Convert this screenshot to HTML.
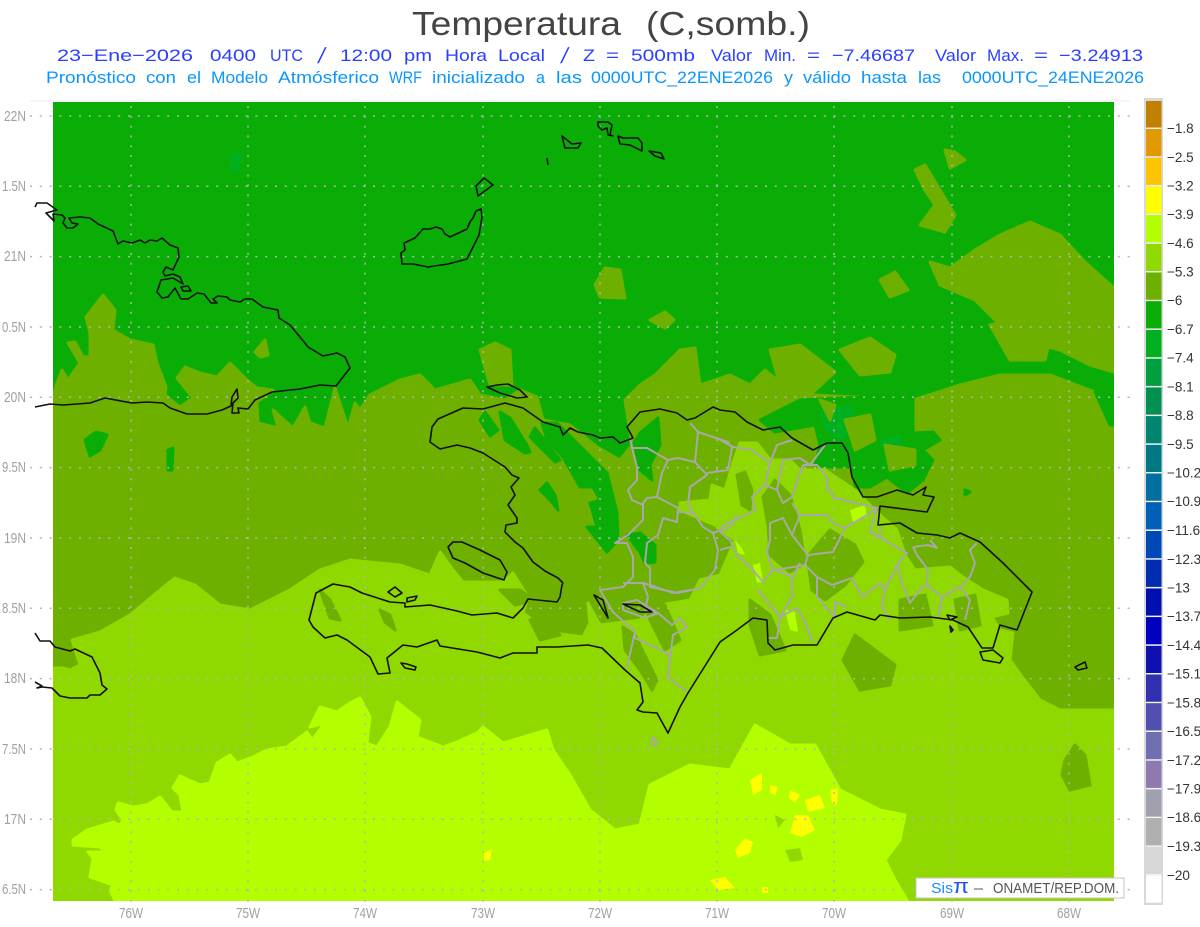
<!DOCTYPE html>
<html><head><meta charset="utf-8"><title>Temperatura</title>
<style>html,body{margin:0;padding:0;background:#fff}svg{display:block}text{font-family:"Liberation Sans",sans-serif}</style></head>
<body>
<svg width="1200" height="927" viewBox="0 0 1200 927" xmlns="http://www.w3.org/2000/svg">
<rect width="1200" height="927" fill="#fff"/>
<g font-size="33" fill="#444">
<text x="412" y="35" textLength="209" lengthAdjust="spacingAndGlyphs">Temperatura</text>
<text x="646" y="35" textLength="164" lengthAdjust="spacingAndGlyphs">(C,somb.)</text>
</g>
<g font-size="17" fill="#2b40ff">
<text x="57" y="61" textLength="136" lengthAdjust="spacingAndGlyphs">23−Ene−2026</text>
<text x="210" y="61" textLength="46" lengthAdjust="spacingAndGlyphs">0400</text>
<text x="270" y="61" textLength="33" lengthAdjust="spacingAndGlyphs">UTC</text>
<text x="317" y="63" font-size="22" transform="skewX(-12) translate(13.500 0)">/</text>
<text x="340" y="61" textLength="52" lengthAdjust="spacingAndGlyphs">12:00</text>
<text x="404" y="61" textLength="28" lengthAdjust="spacingAndGlyphs">pm</text>
<text x="445" y="61" textLength="42" lengthAdjust="spacingAndGlyphs">Hora</text>
<text x="498" y="61" textLength="47" lengthAdjust="spacingAndGlyphs">Local</text>
<text x="560" y="63" font-size="22" transform="skewX(-12) translate(13.500 0)">/</text>
<text x="583" y="61" textLength="12" lengthAdjust="spacingAndGlyphs">Z</text>
<text x="606" y="61" textLength="13" lengthAdjust="spacingAndGlyphs">=</text>
<text x="631" y="61" textLength="64" lengthAdjust="spacingAndGlyphs">500mb</text>
<text x="711" y="61" textLength="41" lengthAdjust="spacingAndGlyphs">Valor</text>
<text x="764" y="61" textLength="32" lengthAdjust="spacingAndGlyphs">Min.</text>
<text x="807" y="61" textLength="13" lengthAdjust="spacingAndGlyphs">=</text>
<text x="832" y="61" textLength="83" lengthAdjust="spacingAndGlyphs">−7.46687</text>
<text x="935" y="61" textLength="41" lengthAdjust="spacingAndGlyphs">Valor</text>
<text x="987" y="61" textLength="37" lengthAdjust="spacingAndGlyphs">Max.</text>
<text x="1034" y="61" textLength="14" lengthAdjust="spacingAndGlyphs">=</text>
<text x="1059" y="61" textLength="84" lengthAdjust="spacingAndGlyphs">−3.24913</text>
</g>
<g font-size="16.500" fill="#0a96ff">
<text x="46" y="83" textLength="90" lengthAdjust="spacingAndGlyphs">Pronóstico</text>
<text x="146" y="83" textLength="30" lengthAdjust="spacingAndGlyphs">con</text>
<text x="187" y="83" textLength="14" lengthAdjust="spacingAndGlyphs">el</text>
<text x="211" y="83" textLength="57" lengthAdjust="spacingAndGlyphs">Modelo</text>
<text x="278" y="83" textLength="101" lengthAdjust="spacingAndGlyphs">Atmósferico</text>
<text x="389" y="83" textLength="33" lengthAdjust="spacingAndGlyphs">WRF</text>
<text x="432" y="83" textLength="93" lengthAdjust="spacingAndGlyphs">inicializado</text>
<text x="536" y="83" textLength="9" lengthAdjust="spacingAndGlyphs">a</text>
<text x="556" y="83" textLength="26" lengthAdjust="spacingAndGlyphs">las</text>
<text x="591" y="83" textLength="182" lengthAdjust="spacingAndGlyphs">0000UTC_22ENE2026</text>
<text x="784" y="83" textLength="9" lengthAdjust="spacingAndGlyphs">y</text>
<text x="803" y="83" textLength="48" lengthAdjust="spacingAndGlyphs">válido</text>
<text x="861" y="83" textLength="46" lengthAdjust="spacingAndGlyphs">hasta</text>
<text x="918" y="83" textLength="23" lengthAdjust="spacingAndGlyphs">las</text>
<text x="962" y="83" textLength="182" lengthAdjust="spacingAndGlyphs">0000UTC_24ENE2026</text>
</g>
<line x1="30" y1="101" x2="1130" y2="101" stroke="#eee"/>
<clipPath id="c"><rect x="53" y="102" width="1061" height="799"/></clipPath>
<g clip-path="url(#c)" stroke-linejoin="round" stroke-width="3">
<rect x="53" y="102" width="1061" height="799" fill="#0aad05"/>
<g fill="#6eb000" stroke="#6eb000">
<polygon points="53,395 58,380 62,370 68,380 80,363 68,343 75,342 83,357 90,357 90,333 86,317 103,295 115,310 113,330 130,340 153,345 157,363 166,387 165,395 180,407 193,398 177,378 185,367 200,373 217,377 230,363 247,380 257,388 273,390 257,402 258,423 278,428 273,410 293,428 305,407 310,423 325,428 335,388 348,428 355,403 360,410 370,395 400,380 420,375 435,390 470,380 480,395 505,400 520,390 537,397 543,420 570,425 597,447 620,460 632,445 625,400 640,385 655,375 680,350 695,348 700,385 730,375 750,385 765,370 790,390 815,395 913,400 960,385 1000,375 1050,375 1095,392 1110,425 1114,425 1114,901 53,901"/>
<polygon points="1114,288 1085,262 1060,235 1030,222 1000,235 975,250 950,268 930,262 940,285 975,300 1000,325 1040,345 1060,350 1090,365 1114,372"/>
<polygon points="915,170 925,165 955,215 945,232 920,225 935,205 925,190"/>
<polygon points="945,150 955,152 965,160 950,168"/>
<polygon points="595,285 605,268 620,270 625,298 600,297"/>
<polygon points="880,280 895,272 908,290 890,297"/>
<polygon points="650,320 665,312 674,320 665,328"/>
<polygon points="480,350 495,343 510,350 512,385 490,385"/>
<polygon points="840,350 870,338 895,355 890,372 860,375"/>
<polygon points="990,325 1020,318 1050,340 1045,360 1010,360"/>
<polygon points="1060,325 1080,322 1090,340 1070,345"/>
<polygon points="770,350 800,345 835,372 810,395 780,385"/>
<polygon points="255,352 265,340 268,355 260,357"/>
</g>
<g fill="#0aad05" stroke="#0aad05">
<polygon points="800,400 760,420 775,432 815,425 820,445 815,465 830,467 853,467 855,487 870,487 887,477 907,493 923,480 933,460 923,450 940,440 933,432 913,433 913,395"/>
<polygon points="1114,380 1095,392 1110,425 1114,425"/>
<polygon points="542,423 557,423 607,473 617,513 618,540 607,552 587,527 597,527 590,503 600,500 593,487 580,487 563,457 547,440"/>
<polygon points="500,412 510,418 527,445 530,452 525,453 505,440"/>
<polygon points="530,437 535,428 560,460 555,462"/>
<polygon points="480,420 485,412 498,430 490,436"/>
<polygon points="634,443 640,433 658,418 660,445 650,465 652,480 640,470"/>
<polygon points="627,535 640,533 655,545 655,562 645,563 640,552"/>
<polygon points="85,440 96,432 107,435 100,450 90,456"/>
<polygon points="168,450 173,448 172,470 168,470"/>
<polygon points="540,490 547,483 555,495 558,510 550,500"/>
<polygon points="785,520 790,520 790,535 785,535"/>
<polygon points="812,530 818,528 822,540 815,542"/>
<polygon points="965,490 970,492 965,495"/>
</g>
<g fill="#00b020">
<polygon points="230,155 240,152 243,160 236,173 231,170"/>
<polygon points="820,410 850,405 860,430 840,440 825,430"/>
<polygon points="880,440 900,435 905,450 885,455"/>
</g>
<g fill="#6eb000" stroke="#6eb000">
<polygon points="845,420 870,415 875,440 855,450"/>
<polygon points="885,445 915,450 915,465 890,470"/>
<polygon points="820,400 835,405 830,420"/>
</g>
<polygon fill="#8fd900" stroke="#8fd900" points="53,668 63,668 70,670 80,665 72,640 100,632 130,615 160,590 175,578 195,585 220,605 250,610 290,590 320,570 350,560 400,565 430,575 440,552 453,570 463,582 503,582 513,573 528,597 523,613 537,623 553,633 583,637 590,623 588,603 600,625 640,620 660,605 690,600 700,580 720,575 735,540 715,525 680,510 680,503 710,500 712,485 725,490 733,463 740,443 757,443 770,460 790,460 800,470 825,470 840,480 855,490 870,505 880,515 897,530 905,555 915,570 950,567 960,575 983,590 1007,600 1008,613 992,617 1000,630 1013,633 1010,660 1017,670 1040,700 1060,710 1114,710 1114,905 53,905"/>
<g fill="#6eb000" stroke="#6eb000">
<polygon points="737,475 745,472 752,490 750,510 742,505"/>
<polygon points="763,497 775,480 790,495 800,530 805,563 790,572 770,555 768,525"/>
<polygon points="807,557 830,530 855,545 863,562 845,585 825,600 812,590"/>
<polygon points="843,660 855,635 875,650 895,665 890,685 860,690"/>
<polygon points="1065,760 1075,745 1085,755 1090,785 1070,790 1062,775"/>
<polygon points="623,627 635,635 657,680 652,690 640,670 625,650"/>
<polygon points="530,620 545,615 560,635 540,640"/>
<polygon points="500,590 520,590 535,600 515,605"/>
<polygon points="750,600 770,615 785,650 760,655 750,625"/>
<polygon points="320,590 330,600 340,620 330,618"/>
<polygon points="380,610 390,615 395,630 385,622"/>
<polygon points="640,590 665,605 680,640 665,650 650,620"/>
<polygon points="900,600 925,595 932,625 900,630"/>
<polygon points="955,600 975,595 980,625 960,630"/>
</g>
<polygon fill="#b3ff00" stroke="#b3ff00" points="117,905 110,890 113,885 90,877 93,858 88,852 105,852 100,847 73,845 73,840 87,830 113,822 120,825 123,820 116,810 118,803 133,807 147,805 160,797 172,812 183,812 180,795 173,788 180,776 200,785 210,783 217,763 230,755 237,763 253,757 267,750 287,747 307,732 312,740 325,723 310,727 320,707 337,712 350,703 360,698 370,717 367,743 377,747 390,727 397,702 420,720 417,737 443,747 457,742 477,733 483,727 503,743 547,730 553,750 570,775 590,810 615,830 640,825 650,785 690,765 730,770 755,725 790,745 815,745 840,790 880,810 905,815 900,840 885,860 895,880 910,905"/>
<g fill="#b3ff00">
<polygon points="850,510 865,505 867,517 853,522"/>
<polygon points="753,565 760,563 763,582 757,583"/>
<polygon points="785,610 795,612 798,632 790,630"/>
<polygon points="735,540 742,548 745,555 738,553"/>
</g>
<g fill="#8fd900"><polygon points="785,850 800,848 803,860 790,862"/><polygon points="775,815 785,820 778,828"/></g>
<g fill="#ffff00">
<polygon points="750,780 762,773 762,790 753,795"/>
<polygon points="790,790 800,795 795,803 789,798"/>
<polygon points="805,800 820,795 825,808 808,812"/>
<polygon points="830,790 838,788 837,805 832,803"/>
<polygon points="795,815 808,815 815,830 802,837 790,833"/>
<polygon points="735,850 745,838 753,842 750,853 738,858"/>
<polygon points="710,880 725,877 735,888 718,890"/>
<polygon points="484,853 492,849 490,860 484,861"/>
<polygon points="762,887 768,887 768,893 762,893"/>
<polygon points="770,785 778,787 775,795 770,793"/>
</g>
</g>
<g stroke="#b4b4b4" stroke-width="1.500" stroke-dasharray="2 7.800" fill="none">
<path d="M30 116H1133M30 186.300H1133M30 256.600H1133M30 327H1133M30 397.300H1133M30 467.600H1133M30 538H1133M30 608.300H1133M30 678.600H1133M30 749H1133M30 819.300H1133M30 889.600H1133"/>
<path d="M131 106V908M248 106V908M365 106V908M483 106V908M600 106V908M717 106V908M834 106V908M952 106V908M1069 106V908"/>
</g>
<g fill="none" stroke="#a8a8a8" stroke-width="2" stroke-linejoin="round">
<path d="M630 438L633 452 637 467 637 480 628 490 632 500 643 505 643 520 628 535 615 543 627 543 633 557 633 577 623 587 600 590 613 612 635 632 627 667"/>
<path d="M633 448L647 448 668 460 678 458 695 462 698 432 690 423"/>
<path d="M668 460L662 473 657 497 647 498 642 505"/>
<path d="M657 497L678 508 677 522 663 518 658 535 647 543 645 563 650 568 650 588"/>
<path d="M695 462L707 475 690 487 688 505 703 527 713 533 718 550 715 570 700 588 678 593 650 587"/>
<path d="M678 512L695 513M698 432L728 442 732 448 728 470 707 473M713 533L730 527 737 515"/>
<path d="M720 440L733 447 752 450 770 463 765 485 777 490 783 460 800 458 810 465 825 445"/>
<path d="M792 440L777 445 770 463M765 485L752 497 755 510 740 518 723 525 720 532"/>
<path d="M803 465L792 497 783 503 777 490M792 503L800 515 827 515 833 523 845 528 867 515 877 508 835 498 827 488 827 477 817 465 803 465"/>
<path d="M800 515L792 535 808 555 833 552 845 528M770 523L783 518 792 535M770 523L770 540 767 552 773 570 763 582 753 570 737 555 730 540 720 532"/>
<path d="M808 555L805 565 775 570 793 577 800 563M805 565L817 577 817 597 835 617 835 602 847 607"/>
<path d="M817 577L832 585 852 578 862 597 880 583 885 590 882 607 890 620"/>
<path d="M870 532L907 553 897 565 885 590M897 565L902 583 910 603 922 587 927 585 942 597 938 617M942 597L960 587 970 600 965 620"/>
<path d="M877 507L870 532 880 537 880 525M913 547L928 545 937 548 930 540M913 547L917 555 928 570 927 585M977 543L970 550 975 563 970 577 960 587"/>
<path d="M792 577L792 597 780 617 777 638 767 638M758 590L780 617 797 608 805 622 813 643"/>
<path d="M635 632L635 638 667 653 670 658 668 677 687 692M643 583L648 597 645 610 658 613 672 625 680 618 687 627 673 635 670 658M623 583L643 583 650 585 673 593 690 590M650 570L650 585M623 603L637 600 658 613M623 603L623 610 645 618 658 613"/>
<path d="M720 550L730 547M653 737L657 742 655 746 651 744Z"/>
</g>
<g fill="none" stroke="#111" stroke-width="1.600" stroke-linejoin="round">
<path d="M35 207L37 203 47 203 57 210 46 213 54 221 53 214 62 215 65 218 63 223 67 228 73 228 78 224 72 223 69 218 80 217 90 218 98 224 113 231 118 244 123 241 132 243 140 240 145 243 150 240 157 241 162 238 170 245 178 248 179 257 173 270 166 267 163 272 165 276 173 274 180 277 183 284 173 278 161 280 157 292 162 298 168 297 175 288 181 299 188 299 197 293 204 294 211 303 217 303 213 299 218 296 227 297 230 300 240 302 245 299 252 299 263 307 278 310 279 318 290 325 300 337 308 347 323 356 337 353 345 357 350 368 343 377 336 386 320 385 300 389 272 392 255 400 248 409 238 408 239 413 232 413 233 403 238 398 237 389 232 397 231 406 222 410 207 414 187 414 170 408 163 403 147 402 132 403 105 398 90 403 63 405 50 404 35 407"/>
<path d="M181 287L188 286 191 291 183 291Z"/>
<path d="M401 253L405 250 404 243 415 238 423 229 430 229 436 227 442 229 445 234 450 237 467 229 470 222 473 218 476 211 481 209 482 217 479 235 467 259 448 264 428 267 413 264 402 264Z"/>
<path d="M476 186L484 178 493 185 478 196Z"/>
<path d="M547 158L548 165"/>
<path d="M562 136L572 144 581 143 578 148 565 148Z"/>
<path d="M598 122L608 122 612 125 610 135 613 136 608 135 607 128 602 130 598 126Z"/>
<path d="M618 136L623 138 638 138 642 143 642 151 630 145 620 144Z"/>
<path d="M649 151L661 153 664 159 655 156Z"/>
<path d="M487 387L497 385 508 384 520 390 527 397 517 398 500 393Z"/>
<path d="M448 547L453 542 462 542 480 550 500 560 507 572 504 580 483 573 465 563 453 558Z"/>
<path d="M563 583L558 578 545 571 533 562 523 548 515 542 505 532 506 525 517 523 517 518 508 505 515 495 511 487 519 478 512 475 505 467 483 453 470 448 457 445 440 449 430 442 432 427 438 419 463 408 483 409 505 403 523 408 543 422 560 427 563 435 570 428 578 432 593 435 600 438 613 437 620 443 633 438 627 427 640 412 660 409 677 413 687 420 695 418 713 407 720 410 735 412 747 422 763 430 780 427 792 438 813 450 827 443 842 443 848 453 852 477 863 497 877 497 897 490 913 495 926 487 923 495 934 497 927 512 880 506 878 525 900 523 917 533 937 535 950 538 960 533 980 542 1003 563 1032 592 1017 630 1000 625 993 648 982 648 968 627 953 620 930 617 900 618 880 615 875 620 847 612 833 618 817 645 793 645 775 650 768 643 767 620 753 618 737 630 720 642 688 693 680 707 668 733 657 713 643 712 637 710 643 702 640 683 625 670 602 648 588 645 557 647 537 647 537 653 513 653 500 658 477 652 440 646 437 640 417 647 403 645 387 658 390 673 378 674 370 657 347 640 337 635 325 638 313 627 309 620 316 593 333 584 350 587 362 593 390 602 405 603 405 607 430 605 457 611 472 615 497 613 513 618 523 608 528 599 557 602 560 597 562 585 563 583"/>
<path d="M401 663L407 664 416 667 415 670 405 668Z"/>
<path d="M388 592L395 587 402 593 395 597Z"/>
<path d="M407 598L417 596 415 600 407 602Z"/>
<path d="M980 652L993 650 1003 658 1000 663 983 660Z"/>
<path d="M947 615L957 617 950 620Z"/>
<path d="M950 626L953 630 951 632Z"/>
<path d="M35 633L40 641 50 641 55 647 70 651 75 649 92 657 100 673 102 685 107 689 100 695 90 695 87 698 70 698 60 696 52 688 42 687 37 688 42 686 35 682"/>
<path d="M1075 667L1085 662 1087 668 1078 670Z"/>
<path d="M594 595L608 618 603 600Z"/>
<path d="M623 604L640 605 652 612 640 612Z"/>
</g>
<g fill="#a0a0a0" font-size="15">
<text x="4" y="121" textLength="22" lengthAdjust="spacingAndGlyphs">22N</text><text x="2" y="191" textLength="24" lengthAdjust="spacingAndGlyphs">1.5N</text><text x="4" y="261" textLength="22" lengthAdjust="spacingAndGlyphs">21N</text><text x="2" y="332" textLength="24" lengthAdjust="spacingAndGlyphs">0.5N</text><text x="4" y="402" textLength="22" lengthAdjust="spacingAndGlyphs">20N</text><text x="2" y="472" textLength="24" lengthAdjust="spacingAndGlyphs">9.5N</text><text x="4" y="543" textLength="22" lengthAdjust="spacingAndGlyphs">19N</text><text x="2" y="613" textLength="24" lengthAdjust="spacingAndGlyphs">8.5N</text><text x="4" y="683" textLength="22" lengthAdjust="spacingAndGlyphs">18N</text><text x="2" y="754" textLength="24" lengthAdjust="spacingAndGlyphs">7.5N</text><text x="4" y="824" textLength="22" lengthAdjust="spacingAndGlyphs">17N</text><text x="2" y="894" textLength="24" lengthAdjust="spacingAndGlyphs">6.5N</text>
</g>
<g fill="#a0a0a0" font-size="15">
<text x="119" y="918" textLength="24" lengthAdjust="spacingAndGlyphs">76W</text><text x="236" y="918" textLength="24" lengthAdjust="spacingAndGlyphs">75W</text><text x="353" y="918" textLength="24" lengthAdjust="spacingAndGlyphs">74W</text><text x="471" y="918" textLength="24" lengthAdjust="spacingAndGlyphs">73W</text><text x="588" y="918" textLength="24" lengthAdjust="spacingAndGlyphs">72W</text><text x="705" y="918" textLength="24" lengthAdjust="spacingAndGlyphs">71W</text><text x="822" y="918" textLength="24" lengthAdjust="spacingAndGlyphs">70W</text><text x="940" y="918" textLength="24" lengthAdjust="spacingAndGlyphs">69W</text><text x="1057" y="918" textLength="24" lengthAdjust="spacingAndGlyphs">68W</text>
</g>
<rect x="1144" y="98" width="19" height="807" fill="#d8d8d8"/>
<g stroke="#fff" stroke-width="1" fill="none">
<rect x="1146" y="101" width="15.500" height="26.500" fill="#c08000" stroke="none"/>
<rect x="1146" y="129" width="15.500" height="27.200" fill="#e09a00" stroke="none"/>
<rect x="1146" y="157.700" width="15.500" height="27.200" fill="#ffc400" stroke="none"/>
<rect x="1146" y="186.400" width="15.500" height="27.200" fill="#ffff00" stroke="none"/>
<rect x="1146" y="215.100" width="15.500" height="27.200" fill="#b3ff00" stroke="none"/>
<rect x="1146" y="243.800" width="15.500" height="27.200" fill="#8fd900" stroke="none"/>
<rect x="1146" y="272.500" width="15.500" height="27.200" fill="#6eb000" stroke="none"/>
<rect x="1146" y="301.200" width="15.500" height="27.200" fill="#0aad05" stroke="none"/>
<rect x="1146" y="330" width="15.500" height="27.200" fill="#00b020" stroke="none"/>
<rect x="1146" y="358.700" width="15.500" height="27.200" fill="#00a040" stroke="none"/>
<rect x="1146" y="387.400" width="15.500" height="27.200" fill="#009050" stroke="none"/>
<rect x="1146" y="416.100" width="15.500" height="27.200" fill="#008570" stroke="none"/>
<rect x="1146" y="444.800" width="15.500" height="27.200" fill="#007885" stroke="none"/>
<rect x="1146" y="473.500" width="15.500" height="27.200" fill="#0070a0" stroke="none"/>
<rect x="1146" y="502.200" width="15.500" height="27.200" fill="#0060b8" stroke="none"/>
<rect x="1146" y="531" width="15.500" height="27.200" fill="#0048b8" stroke="none"/>
<rect x="1146" y="559.700" width="15.500" height="27.200" fill="#002cb0" stroke="none"/>
<rect x="1146" y="588.400" width="15.500" height="27.200" fill="#0010b0" stroke="none"/>
<rect x="1146" y="617.100" width="15.500" height="27.200" fill="#0000c0" stroke="none"/>
<rect x="1146" y="645.800" width="15.500" height="27.200" fill="#1010b0" stroke="none"/>
<rect x="1146" y="674.500" width="15.500" height="27.200" fill="#3030b0" stroke="none"/>
<rect x="1146" y="703.200" width="15.500" height="27.200" fill="#5050b0" stroke="none"/>
<rect x="1146" y="732" width="15.500" height="27.200" fill="#7070b0" stroke="none"/>
<rect x="1146" y="760.700" width="15.500" height="27.200" fill="#9078b0" stroke="none"/>
<rect x="1146" y="789.400" width="15.500" height="27.200" fill="#a0a0b0" stroke="none"/>
<rect x="1146" y="818.100" width="15.500" height="27.200" fill="#b0b0b0" stroke="none"/>
<rect x="1146" y="846.800" width="15.500" height="27.200" fill="#d8d8d8" stroke="none"/>
<rect x="1146" y="875.500" width="15.500" height="27.200" fill="#ffffff" stroke="none"/>
<path d="M1146 128.300H1161.500M1146 157H1161.500M1146 185.700H1161.500M1146 214.400H1161.500M1146 243.100H1161.500M1146 271.800H1161.500M1146 300.500H1161.500M1146 329.200H1161.500M1146 358H1161.500M1146 386.700H1161.500M1146 415.400H1161.500M1146 444.100H1161.500M1146 472.800H1161.500M1146 501.500H1161.500M1146 530.200H1161.500M1146 559H1161.500M1146 587.700H1161.500M1146 616.400H1161.500M1146 645.100H1161.500M1146 673.800H1161.500M1146 702.500H1161.500M1146 731.200H1161.500M1146 760H1161.500M1146 788.700H1161.500M1146 817.400H1161.500M1146 846.100H1161.500M1146 874.800H1161.500" stroke-opacity=".85"/>
</g>
<g fill="#333" font-size="13.500">
<text x="1167" y="133">−1.8</text><text x="1167" y="162">−2.5</text><text x="1167" y="190.500">−3.2</text><text x="1167" y="219">−3.9</text><text x="1167" y="248">−4.6</text><text x="1167" y="276.500">−5.3</text><text x="1167" y="305">−6</text><text x="1167" y="334">−6.7</text><text x="1167" y="362.500">−7.4</text><text x="1167" y="391.500">−8.1</text><text x="1167" y="420">−8.8</text><text x="1167" y="449">−9.5</text><text x="1167" y="477.500">−10.2</text><text x="1167" y="506">−10.9</text><text x="1167" y="535">−11.6</text><text x="1167" y="564">−12.3</text><text x="1167" y="592.500">−13</text><text x="1167" y="621">−13.7</text><text x="1167" y="650">−14.4</text><text x="1167" y="678.500">−15.1</text><text x="1167" y="707.500">−15.8</text><text x="1167" y="736">−16.5</text><text x="1167" y="765">−17.2</text><text x="1167" y="793.500">−17.9</text><text x="1167" y="822">−18.6</text><text x="1167" y="851">−19.3</text><text x="1167" y="880">−20</text>
</g>
<rect x="916" y="878" width="208" height="20" fill="#fff" stroke="#c4c4c4"/>
<text x="931" y="893" font-size="15" fill="#1a8cff" textLength="22" lengthAdjust="spacingAndGlyphs">Sis</text>
<text x="953" y="893" font-size="20" fill="#1a50ff" textLength="16" lengthAdjust="spacingAndGlyphs">π</text>
<text x="974" y="893" font-size="14.500" fill="#555" textLength="9" lengthAdjust="spacingAndGlyphs">—</text>
<text x="993" y="893" font-size="14.500" fill="#555" textLength="126" lengthAdjust="spacingAndGlyphs">ONAMET/REP.DOM.</text>
</svg>
</body></html>
